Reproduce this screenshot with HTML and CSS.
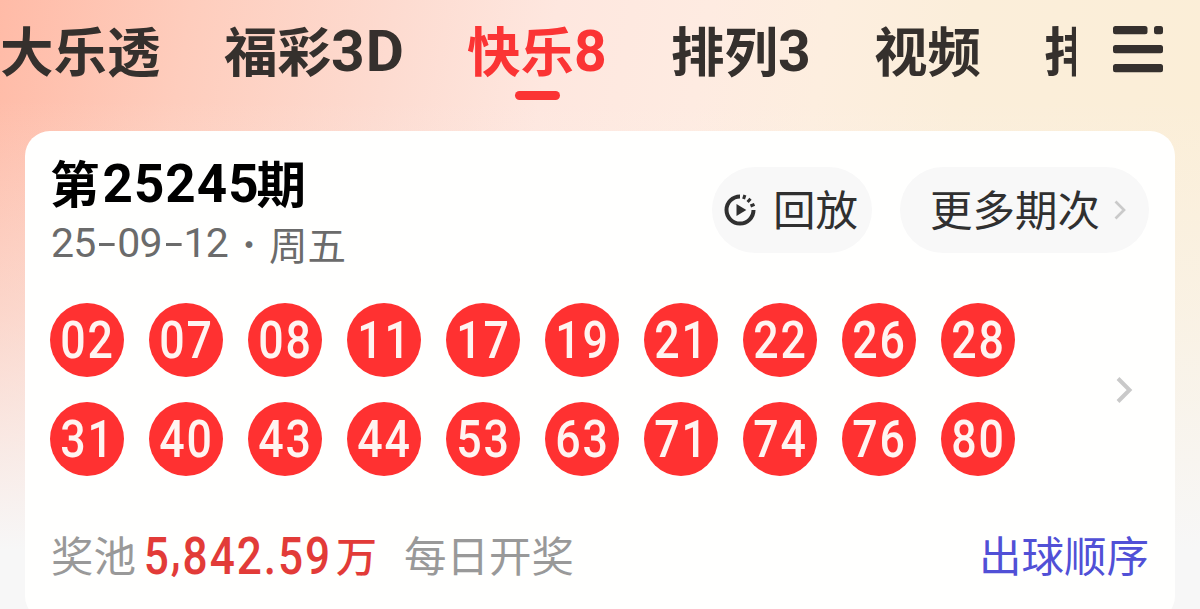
FILE: index.html
```html
<!DOCTYPE html>
<html lang="zh-CN">
<head>
<meta charset="utf-8">
<title>快乐8</title>
<link rel="stylesheet" href="styles.css">
</head>
<body>
<header class="topbar">
  <nav class="tabs">
    <a class="tab">大乐透</a>
    <a class="tab">福彩<span class="tab-num wide">3D</span></a>
    <a class="tab active">快乐<span class="tab-num">8</span></a>
    <a class="tab">排列<span class="tab-num">3</span></a>
    <a class="tab">视频</a>
    <a class="tab cut">排</a>
  </nav>
  <svg class="menu" width="52" height="48" viewBox="0 0 52 48"><g fill="#35302d"><rect x="1" y="1" width="34.500" height="8.300" rx="2.500"/><rect x="42" y="1" width="9" height="8.300" rx="2.500"/><rect x="1" y="20" width="50" height="8.300" rx="2.500"/><rect x="1" y="39" width="50" height="8.300" rx="2.500"/></g></svg>
</header>
<main class="card">
  <section class="head">
    <div class="issue">
      <h1 class="title">第<span class="title-num">25245</span>期</h1>
      <p class="date"><span class="date-num">25<i class="dash">-</i>09<i class="dash">-</i>12</span><span class="dot">·</span><span>周五</span></p>
    </div>
    <div class="actions">
      <button class="pill replay">
        <svg width="32" height="32" viewBox="0 0 32 32"><path d="M16 2.500A13.500 13.500 0 1 0 29.500 16" fill="none" stroke="#303030" stroke-width="4"/><path d="M19.600 5l1.300-4M23.600 8l2.900-3.200M26.500 12l4-1.700" stroke="#303030" stroke-width="3"/><path d="M12.500 10v12L22.300 16z" fill="#303030"/></svg>
        <span>回放</span>
      </button>
      <button class="pill more">
        <span>更多期次</span>
        <svg width="12" height="20" viewBox="0 0 12 20"><path d="M1.500 1.500L10 10l-8.500 8.500" fill="none" stroke="#cacaca" stroke-width="2.700"/></svg>
      </button>
    </div>
  </section>
  <section class="draw">
    <div class="balls">
      <div class="ball"><span>02</span></div><div class="ball"><span>07</span></div><div class="ball"><span>08</span></div><div class="ball"><span>11</span></div><div class="ball"><span>17</span></div><div class="ball"><span>19</span></div><div class="ball"><span>21</span></div><div class="ball"><span>22</span></div><div class="ball"><span>26</span></div><div class="ball"><span>28</span></div>
      <div class="ball"><span>31</span></div><div class="ball"><span>40</span></div><div class="ball"><span>43</span></div><div class="ball"><span>44</span></div><div class="ball"><span>53</span></div><div class="ball"><span>63</span></div><div class="ball"><span>71</span></div><div class="ball"><span>74</span></div><div class="ball"><span>76</span></div><div class="ball"><span>80</span></div>
    </div>
    <svg width="18" height="28" viewBox="0 0 18 28"><path d="M3 2.500L14.500 14 3 25.500" fill="none" stroke="#c9c9c9" stroke-width="4"/></svg>
  </section>
  <footer class="foot">
    <span class="label">奖池</span>
    <span class="amount">5<i class="comma">,</i>842.59</span>
    <span class="unit">万</span>
    <span class="label">每日开奖</span>
    <a class="order">出球顺序</a>
  </footer>
</main>
</body>
</html>
```

FILE: styles.css
```css
* { box-sizing: border-box; }
body {
  margin: 0;
  height: 609px;
  overflow: hidden;
  font-family: "Noto Sans CJK SC", sans-serif;
  background:
    linear-gradient(180deg, rgba(247,247,247,0) 100px, rgba(247,247,247,.4) 310px, #f7f7f7 550px),
    linear-gradient(100deg, #ffbba7 0, #fecdbd 190px, #fddbd0 390px, #fee7df 550px, #feebe1 700px, #fdeedf 820px, #fbeeda 960px, #fbeed6 1300px);
}
.topbar { display: flex; height: 131px; }
.tabs {
  display: grid;
  grid-template-columns: 224px 243px 204px 203px 170px 32px;
  width: 1076px;
  overflow: hidden;
}
.tab {
  display: flex;
  height: 98px;
  font-size: 53.500px;
  font-weight: 700;
  line-height: 98px;
  white-space: nowrap;
  color: #35302d;
}
.tab-num {
  font-family: Roboto, sans-serif;
  font-size: 57px;
  font-weight: 700;
  line-height: 104px;
}
.tab-num.wide { letter-spacing: 1px; transform: scaleX(1.03); transform-origin: 0 0; }
.tab.active { color: #fb3434; position: relative; }
.tab.active::after {
  content: "";
  position: absolute;
  left: 48px;
  top: 91px;
  width: 45px;
  height: 9px;
  border-radius: 5px;
  background: #fb3434;
}
.tab.cut { overflow: hidden; }
.menu { margin: 25px 0 0 36px; }
.card {
  width: 1150px;
  height: 490px;
  margin-left: 25px;
  padding: 0 26px;
  border-radius: 25px;
  background: #fffffe;
}
.head { display: flex; justify-content: space-between; height: 172px; }
.issue { padding-top: 21px; }
.title {
  display: flex;
  margin: 0 0 0 -1px;
  font-size: 49.500px;
  font-weight: 700;
  line-height: 60px;
  color: #000;
}
.title-num {
  width: 157px;
  padding-left: 3px;
  font-family: Roboto, sans-serif;
  font-size: 53px;
  letter-spacing: 1px;
  line-height: 65px;
}
.date {
  display: flex;
  margin: -4px 0 0;
  font-size: 38.500px;
  line-height: 60px;
  color: #6b6b6b;
}
.date-num {
  width: 178px;
  font-family: Roboto, sans-serif;
  font-size: 41px;
  letter-spacing: -.9px;
  white-space: nowrap;
}
.dash { display: inline-block; width: 22px; font-style: normal; text-align: center; transform: scaleX(1.6); }
.dot { width: 40px; font-size: 32px; text-align: center; }
.actions { display: flex; gap: 28px; padding-top: 36px; }
.pill {
  display: flex;
  align-items: center;
  height: 86px;
  padding: 0;
  border: 0;
  border-radius: 43px;
  background: #f8f8f8;
  font: 400 42.500px/82px "Noto Sans CJK SC", sans-serif;
  color: #303030;
  white-space: nowrap;
}
.pill span { height: 86px; }
.replay { width: 160px; padding-left: 12px; gap: 17px; }
.more { width: 249px; padding-left: 30px; gap: 14px; }
.draw { display: flex; align-items: center; justify-content: space-between; height: 173px; margin-left: -1px; }
.balls { display: grid; grid-template-columns: repeat(10, 74px); gap: 25px; }
.ball {
  display: flex;
  justify-content: center;
  height: 74px;
  border-radius: 50%;
  background: #ff3131;
  color: #fff4f1;
  font: 500 52px/76px Roboto, sans-serif;
}
.ball span { padding-left: 2px; letter-spacing: 2px; transform: scaleX(.86); }
.draw > svg { margin-right: 16px; }
.foot {
  display: flex;
  height: 60px;
  margin-top: 48px;
  font-size: 42.500px;
  line-height: 60px;
  color: #999;
  white-space: nowrap;
}
.amount {
  width: 200px;
  padding-left: 9px;
  font-family: Roboto, sans-serif;
  font-size: 52px;
  font-weight: 500;
  letter-spacing: 2.300px;
  line-height: 65px;
  transform: scaleX(.85);
  transform-origin: 0 0;
  color: #e23b38;
}
.comma { display: inline-block; font-style: normal; transform: translateY(-5px); }
.unit { width: 68px; font-size: 41px; font-weight: 500; color: #e23b38; }
.order { margin-left: auto; color: #5150d6; }
```
